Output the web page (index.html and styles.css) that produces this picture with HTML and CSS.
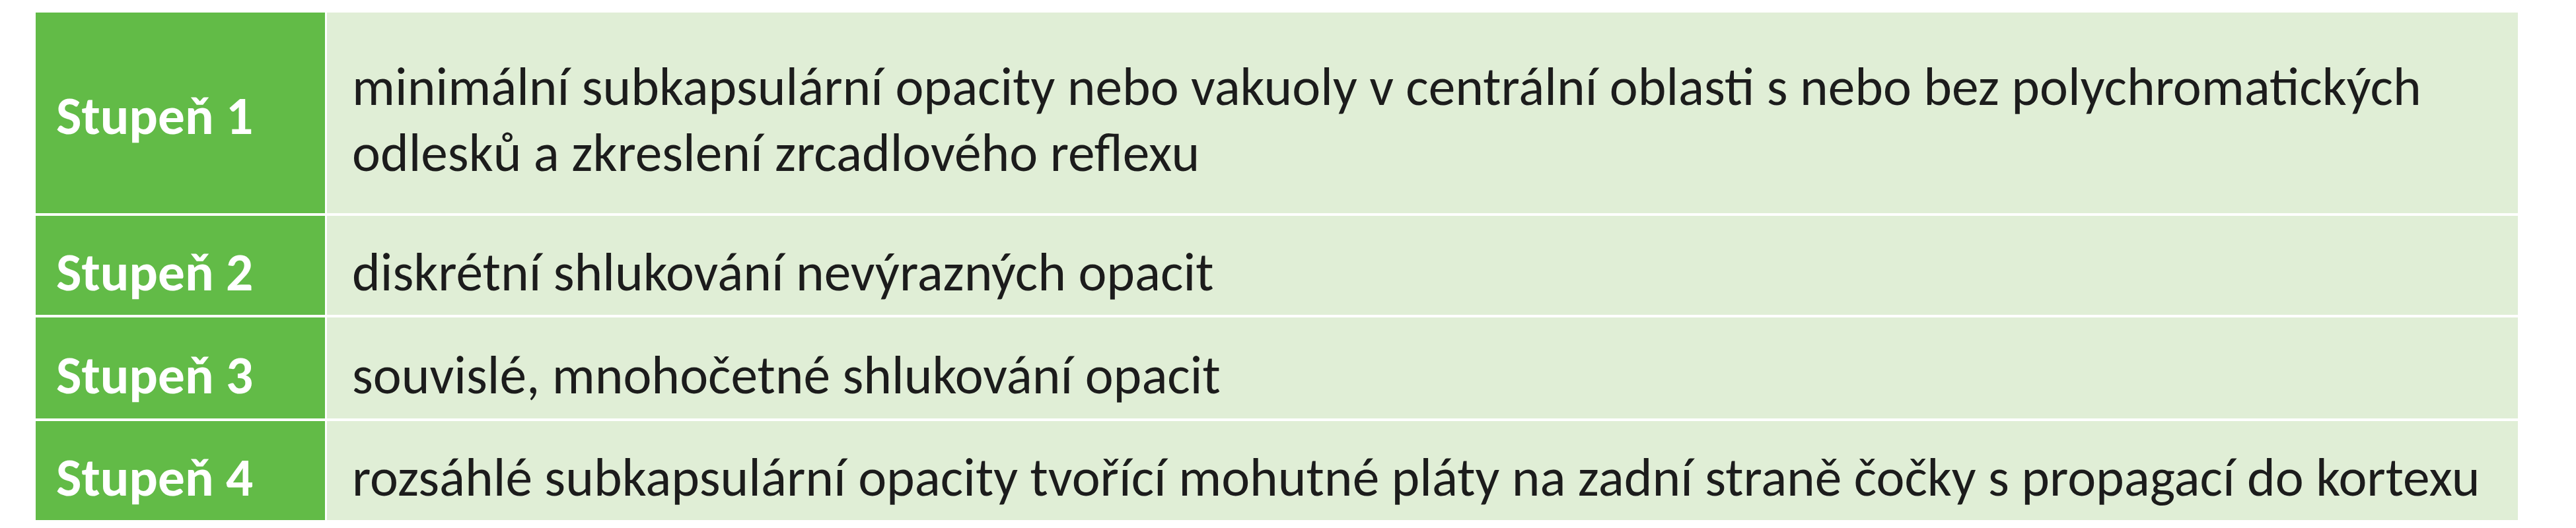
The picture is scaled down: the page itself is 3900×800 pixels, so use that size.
FILE: index.html
```html
<!DOCTYPE html>
<html lang="cs">
<head>
<meta charset="utf-8">
<title>Stupně</title>
<link rel="stylesheet" href="styles.css">
</head>
<body>
<div class="grades">
  <div class="row row-tall">
    <div class="label">Stupeň 1</div>
    <div class="desc">minimální subkapsulární opacity nebo vakuoly v centrální oblasti s nebo bez polychromatických odlesků a zkreslení zrcadlového reflexu</div>
  </div>
  <div class="row">
    <div class="label">Stupeň 2</div>
    <div class="desc">diskrétní shlukování nevýrazných opacit</div>
  </div>
  <div class="row row-mid">
    <div class="label">Stupeň 3</div>
    <div class="desc">souvislé, mnohočetné shlukování opacit</div>
  </div>
  <div class="row">
    <div class="label">Stupeň 4</div>
    <div class="desc">rozsáhlé subkapsulární opacity tvořící mohutné pláty na zadní straně čočky s propagací do kortexu</div>
  </div>
</div>
</body>
</html>
```
FILE: styles.css
```css
html, body {
  margin: 0;
  padding: 0;
  background: #ffffff;
}
body {
  padding: 19px 0 0 54px;
  font-family: Carlito, Calibri, Lato, "Liberation Sans", sans-serif;
  font-size: 81.4px;
  line-height: 100px;
}
.grades {
  width: 3758px;
  display: flex;
  flex-direction: column;
  gap: 4px;
}
.row {
  display: grid;
  grid-template-columns: 438px 1fr;
  column-gap: 3px;
  min-height: 150px;
}
.row-tall {
  min-height: 304px;
}
.row-mid {
  min-height: 153px;
}
.label,
.desc {
  display: flex;
  align-items: center;
  padding-top: 35px;
  padding-bottom: 15px;
  box-sizing: border-box;
}
.label {
  background: #62bb47;
  color: #ffffff;
  font-weight: bold;
  padding-left: 31px;
}
.desc {
  background: #e0eed6;
  color: #1c1c1c;
  padding-left: 38px;
  padding-right: 20px;
}
.row-tall .label {
  padding-top: 23px;
}
```
